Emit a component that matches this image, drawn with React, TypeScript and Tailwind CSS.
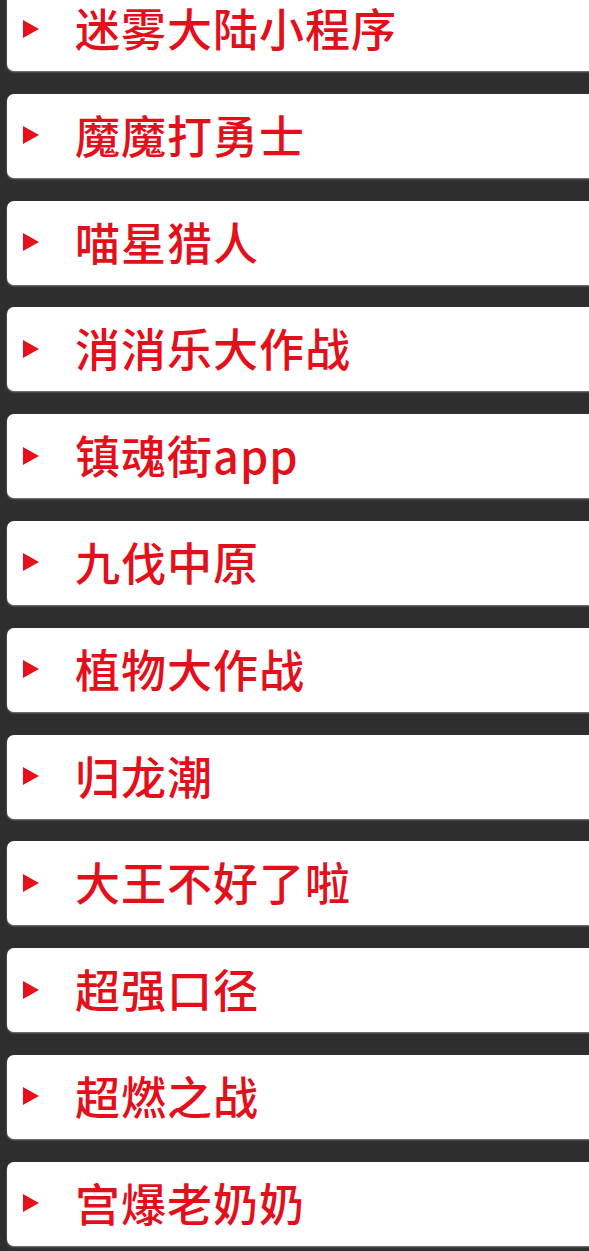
import React from "react";

const items = [
  "迷雾大陆小程序",
  "魔魔打勇士",
  "喵星猎人",
  "消消乐大作战",
  "镇魂街app",
  "九伐中原",
  "植物大作战",
  "归龙潮",
  "大王不好了啦",
  "超强口径",
  "超燃之战",
  "宫爆老奶奶",
];

export default function App() {
  return (
    <div className="h-[1251px] w-[589px] overflow-hidden bg-[#2e2e2e]">
      <div className="-mt-[13px] flex flex-col gap-[22.8px] pl-[7px]">
        {items.map((t) => (
          <div
            key={t}
            className="-mr-4 flex h-[84px] items-center rounded-[7px] bg-white pb-[3px] shadow-[0_1px_2px_rgba(255,255,255,0.4)]"
          >
            <div className="ml-[16px] mt-[2px] h-0 w-0 border-y-[9px] border-l-[16px] border-y-transparent border-l-[#e8101a]" />
            <span
              className="ml-[36px] text-[45px] font-medium leading-none tracking-[1px] text-[#e3101c]"
              style={{ fontFamily: '"Noto Sans CJK SC", "Noto Sans", sans-serif' }}
            >
              {t}
            </span>
          </div>
        ))}
      </div>
    </div>
  );
}
